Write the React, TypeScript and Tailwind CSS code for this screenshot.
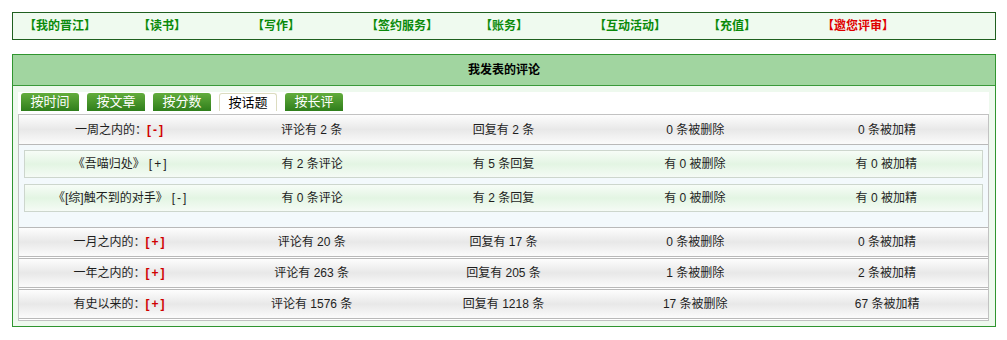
import React from "react";

const FONT = { fontFamily: '"Liberation Sans", "Noto Sans CJK SC", sans-serif' };

const navItems = [
  { t: "【我的晋江】", red: false },
  { t: "【读书】", red: false },
  { t: "【写作】", red: false },
  { t: "【签约服务】", red: false },
  { t: "【账务】", red: false },
  { t: "【互动活动】", red: false },
  { t: "【充值】", red: false },
  { t: "【邀您评审】", red: true },
];

const tabs = ["按时间", "按文章", "按分数", "按话题", "按长评"];

type MainRow = { label: string; sign: string; c: string[] };

const mainRows: MainRow[] = [
  { label: "一月之内的：", sign: "[+]", c: ["评论有 20 条", "回复有 17 条", "0 条被删除", "0 条被加精"] },
  { label: "一年之内的：", sign: "[+]", c: ["评论有 263 条", "回复有 205 条", "1 条被删除", "2 条被加精"] },
  { label: "有史以来的：", sign: "[+]", c: ["评论有 1576 条", "回复有 1218 条", "17 条被删除", "67 条被加精"] },
];

const subRows = [
  { label: "《吾喵归处》", sign: "[+]", c: ["有 2 条评论", "有 5 条回复", "有 0 被删除", "有 0 被加精"] },
  { label: "《[综]触不到的对手》", sign: "[-]", c: ["有 0 条评论", "有 2 条回复", "有 0 被删除", "有 0 被加精"] },
];

function Cells({ first, c }: { first: React.ReactNode; c: string[] }) {
  return (
    <div className="grid grid-cols-5 h-full items-center text-[12px] text-[#1e1e1e] whitespace-pre">
      <div className="text-center">{first}</div>
      {c.map((x, i) => (
        <div key={i} className="text-center">
          {x}
        </div>
      ))}
    </div>
  );
}

function Main({ r, top }: { r: MainRow; top?: boolean }) {
  return (
    <div
      className={
        "h-[30px] px-[5px] border-b border-[#b9b9b9] bg-linear-to-b from-[#fdfdfd] via-[#e8e8e8] to-[#fbfbfb] " +
        (top ? "" : "border-t")
      }
    >
      <Cells
        first={
          <span>
            {r.label}
            <span className="font-bold text-[#d00000] tracking-[2px]">{r.sign}</span>
          </span>
        }
        c={r.c}
      />
    </div>
  );
}

export default function App() {
  return (
    <div className="w-[1007px] h-[340px] bg-white pt-[12px] px-[12px]" style={FONT}>
      {/* top nav */}
      <div className="w-[984px] h-[28px] border border-[#1f5f1f] bg-[#effaef] flex items-center pl-[11px]">
        {navItems.map((n) => (
          <div
            key={n.t}
            className={
              "w-[114px] shrink-0 text-[12px] font-bold " + (n.red ? "text-[#e00000]" : "text-[#0a8a0a]")
            }
          >
            {n.t}
          </div>
        ))}
      </div>

      {/* panel */}
      <div className="mt-[14px] w-[984px] border border-[#2f952f] bg-[#eef9ee]">
        <div className="h-[31px] bg-[#a1d5a0] border-b border-[#3a9a3a] flex items-center justify-center text-[12px] font-bold text-black">
          我发表的评论
        </div>
        <div className="pt-[6px] pl-[5px] pr-[6px] pb-[5px]">
          <div className="bg-white">
            {/* tabs */}
            <div className="flex gap-[8px] pl-[3px] pt-px">
              {tabs.map((t) =>
                t === "按话题" ? (
                  <div
                    key={t}
                    className="w-[58px] h-[18px] rounded-t-[3px] border border-b-0 border-[#dcdcc0] bg-white text-[13px] leading-[17px] text-black text-center"
                  >
                    {t}
                  </div>
                ) : (
                  <div
                    key={t}
                    className="w-[58px] h-[18px] rounded-t-[3px] bg-linear-to-b from-[#62ad3c] to-[#2f7e1b] text-[13px] leading-[18px] text-white text-center"
                  >
                    {t}
                  </div>
                )
              )}
            </div>
            {/* table */}
            <div className="mt-[3px] border border-[#c2c2c2] bg-white">
              <Main
                top
                r={{ label: "一周之内的：", sign: "[-]", c: ["评论有 2 条", "回复有 2 条", "0 条被删除", "0 条被加精"] }}
              />
              <div className="bg-[#f3f9fc] pt-[5px] pb-[15px] px-[5px] flex flex-col gap-[6px]">
                {subRows.map((s, i) => (
                  <div
                    key={i}
                    className="h-[28px] border border-[#cdd6cd] bg-linear-to-b from-[#f7fcf7] via-[#e3f5e3] to-[#f5fbf5]"
                  >
                    <Cells
                      first={
                        <span>
                          {s.label}
                          <span className="ml-[4px] tracking-[2px]">{s.sign}</span>
                        </span>
                      }
                      c={s.c}
                    />
                  </div>
                ))}
              </div>
              <div className="flex flex-col gap-px">
                {mainRows.map((r) => (
                  <Main key={r.label} r={r} />
                ))}
              </div>
              <div className="h-px" />
            </div>
          </div>
        </div>
      </div>
    </div>
  );
}
